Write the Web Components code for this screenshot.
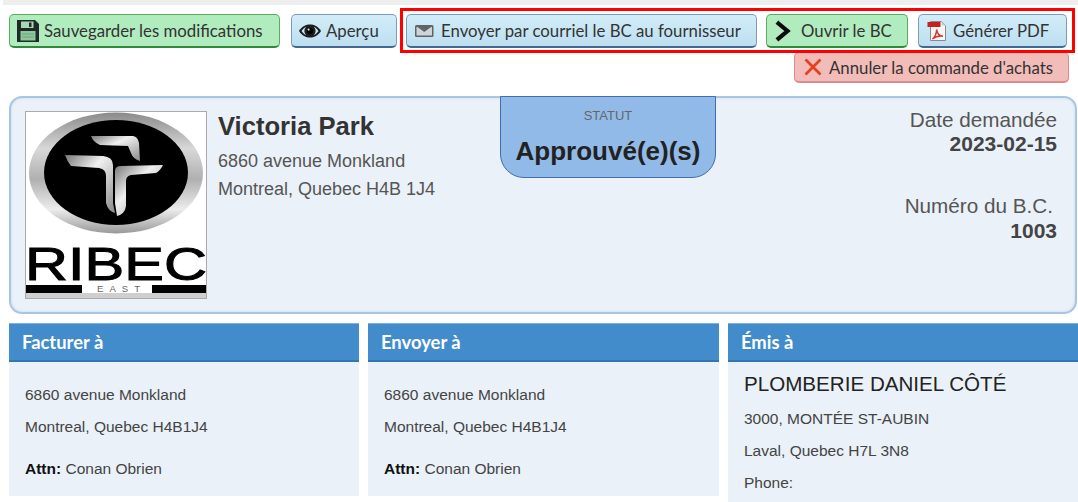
<!DOCTYPE html>
<html lang="fr">
<head>
<meta charset="utf-8">
<title>Bon de commande</title>
<style>
    html, body { margin: 0; height: 502px; overflow: hidden; background: #fff; }
    body { font-family: "Liberation Sans", Arial, sans-serif; color: #444; }
    .topstrip { height: 5px; margin-left: 3px; background: #eeeeee; }
    address-card b { color: #111; }
</style>
</head>
<body>
<div class="topstrip"></div>
<po-toolbar>
    <action-button slot="left" variant="green" style="width:271px">
        <svg slot="icon" width="22" height="22" viewBox="0 0 22 22"><path fill="#1f2a26" d="M0 0h18l4 4v18H0z"/><rect x="4" y="1.500" width="12.500" height="6.500" fill="#a9d9b4"/><rect x="12" y="2.500" width="2.500" height="4.500" fill="#1f2a26"/><rect x="3.500" y="11" width="15" height="9.500" fill="#8fc79c"/><path stroke="#6da67b" d="M5 14h12M5 17h12"/></svg>
        Sauvegarder les modifications
    </action-button>
    <action-button slot="left" variant="blue" style="width:106px">
        <svg slot="icon" width="22" height="22" viewBox="0 0 22 22"><path fill="#1c1c1c" d="M0 11C3 6.200 7 4.500 11 4.500S19 6.200 22 11c-3 4.800-7 6.500-11 6.500S3 15.800 0 11z"/><path fill="#c8e6f4" d="M2.500 11C4.500 8.400 6 7.300 7.300 6.800 6 8 5.400 9.400 5.400 11s.7 3 1.900 4.200C6 14.700 4.500 13.600 2.500 11zM19.500 11c-2 2.600-3.500 3.700-4.800 4.200 1.200-1.200 1.900-2.600 1.900-4.200s-.7-3-1.900-4.200c1.300.5 2.800 1.600 4.800 4.200z"/><circle cx="11" cy="11" r="3" fill="#000"/><circle cx="9.600" cy="9.600" r="1.100" fill="#ddd"/></svg>
        Aperçu
    </action-button>
    <action-button slot="boxed" variant="blue" style="width:351px">
        <svg slot="icon" width="22" height="22" viewBox="0 0 22 22"><rect x="1" y="5" width="18.500" height="12" rx="1.500" fill="#5f6467"/><rect x="2.500" y="7" width="15.500" height="8.500" fill="#cfd4d8"/><path fill="#5f6467" d="M2 6h16.500l-8.250 6z"/></svg>
        Envoyer par courriel le BC au fournisseur
    </action-button>
    <action-button slot="boxed" variant="green" style="width:142px;margin-left:9px">
        <svg slot="icon" width="22" height="22" viewBox="0 0 22 22"><path fill="none" stroke="#0c0c0c" stroke-width="4.200" stroke-linecap="square" d="M4.500 3.500l9 7.500-9 7.500"/></svg>
        Ouvrir le BC
    </action-button>
    <action-button slot="boxed" variant="blue" style="width:149px;margin-left:10px">
        <svg slot="icon" width="22" height="22" viewBox="0 0 22 22"><path fill="#f6f6f6" stroke="#8a8a8a" d="M4.500 1.500h11l4 4v15h-15z"/><path fill="#cfcfcf" d="M15.500 1.500v4h4z"/><rect x="1.500" y="2" width="13" height="5" fill="#c8201d"/><path fill="none" stroke="#d8352f" stroke-width="1.500" d="M6.500 19c2.500-2 4-5.500 4.200-9.500.3 3.500 2.300 6.300 6.300 6.700-3.800-.4-8 .7-10.500 2.800z"/></svg>
        Générer PDF
    </action-button>
    <action-button slot="under" variant="red" style="width:275px;height:31px">
        <svg slot="icon" width="22" height="22" viewBox="0 0 22 22"><path fill="none" stroke="#e8401f" stroke-width="2.800" d="M3.500 3.500l15 15M18.500 3.500l-15 15"/></svg>
        Annuler la commande d'achats
    </action-button>
</po-toolbar>
<po-summary>
    <ribec-logo slot="logo"></ribec-logo>
    <span slot="name">Victoria Park</span>
    <span slot="line1">6860 avenue Monkland</span>
    <span slot="line2">Montreal, Quebec H4B 1J4</span>
    <span slot="status">Approuvé(e)(s)</span>
</po-summary>
<address-row>
    <address-card heading="Facturer à">
        <p>6860 avenue Monkland</p>
        <p>Montreal, Quebec H4B1J4</p>
        <p class="attn"><b>Attn:</b> Conan Obrien</p>
    </address-card>
    <address-card heading="Envoyer à">
        <p>6860 avenue Monkland</p>
        <p>Montreal, Quebec H4B1J4</p>
        <p class="attn"><b>Attn:</b> Conan Obrien</p>
    </address-card>
    <address-card heading="Émis à" vendor>
        <p class="vendor">PLOMBERIE DANIEL CÔTÉ</p>
        <p>3000, MONTÉE ST-AUBIN</p>
        <p>Laval, Quebec H7L 3N8</p>
        <p>Phone:</p>
    </address-card>
</address-row>

<script>
class ActionButton extends HTMLElement {
    constructor() {
        super();
        this.attachShadow({ mode: "open" });
    }
    connectedCallback() {
        this.shadowRoot.innerHTML = `
        <style>
            :host {
                box-sizing: border-box;
                display: flex;
                align-items: center;
                flex: none;
                height: 34px;
                padding-left: 7px;
                gap: 5px;
                border: 1px solid;
                border-bottom-width: 2px;
                border-radius: 5px;
                font: 16.8px Lato, sans-serif;
                color: #333;
                white-space: nowrap;
            }
            :host([variant="green"]) { background: #b0ecbd; border-color: #58ad63 #58ad63 #2f8a3a; }
            :host([variant="blue"]) { background: linear-gradient(#d3edf8, #bcdff0); border-color: #7d9cbc #7d9cbc #45688f; }
            :host([variant="red"]) { background: #f2bdb9; border-color: #dd8a88; }
            .icon { display: flex; width: 22px; justify-content: center; }
        </style>
        <span class="icon"><slot name="icon"></slot></span>
        <slot></slot>`;
    }
}

class PoToolbar extends HTMLElement {
    constructor() {
        super();
        this.attachShadow({ mode: "open" });
    }
    connectedCallback() {
        this.shadowRoot.innerHTML = `
        <style>
            :host { display: block; padding-top: 3px; }
            .row { position: relative; z-index: 1; display: flex; align-items: flex-start; padding-left: 9px; }
            .left { display: flex; gap: 11px; padding-top: 6px; }
            .box {
                display: flex;
                box-sizing: border-box;
                width: 675px;
                height: 45px;
                margin-left: 3px;
                padding: 3px 0 0 3px;
                border: 3px solid #f00;
            }
            .under { display: flex; justify-content: flex-end; padding-right: 9px; margin-top: -1px; }
        </style>
        <div class="row">
            <div class="left"><slot name="left"></slot></div>
            <div class="box"><slot name="boxed"></slot></div>
        </div>
        <div class="under"><slot name="under"></slot></div>`;
    }
}

class RibecLogo extends HTMLElement {
    constructor() {
        super();
        this.attachShadow({ mode: "open" });
    }
    connectedCallback() {
        this.shadowRoot.innerHTML = `
        <style>
            :host { display: block; width: 182px; height: 188px; box-sizing: border-box; outline: 1px solid #aaa; outline-offset: -1px; background: #fff; }
            svg { display: block; }
            text { font-family: "Liberation Sans", sans-serif; }
        </style>
        <svg width="182" height="188" viewBox="0 0 182 188">
            <defs>
                <linearGradient id="rim" x1="0" y1="0" x2="0" y2="1">
                    <stop offset="0" stop-color="#8a8a8a"/><stop offset=".3" stop-color="#d8d8d8"/>
                    <stop offset=".55" stop-color="#b0b0b0"/><stop offset=".8" stop-color="#ececec"/><stop offset="1" stop-color="#999"/>
                </linearGradient>
                <linearGradient id="steel" x1="0" y1="0" x2="1" y2="1">
                    <stop offset="0" stop-color="#777"/><stop offset=".4" stop-color="#f0f0f0"/><stop offset="1" stop-color="#8a8a8a"/>
                </linearGradient>
            </defs>
            <ellipse cx="91" cy="62" rx="87" ry="60.500" fill="url(#rim)"/>
            <ellipse cx="91" cy="61.500" rx="72" ry="52.500" fill="#000"/>
            <path fill="url(#steel)" d="M66 25H108Q113 26 114 32L115 50Q108 48 106 42L103 35 75 34Q68 31 66 25Z"/>
            <path fill="url(#steel)" d="M40 44L78 45Q88 46 88 54V92L90 102Q83 100 81 92V65Q81 58 74 57L46 55Q42 50 40 44Z"/>
            <path fill="url(#steel)" d="M138 54Q135 60 131 62L106 64Q101 65 101 70V95Q100 103 92 105L90 92V60Q90 55 96 55Z"/>
            <text x="0" y="169" font-size="47" textLength="182" lengthAdjust="spacingAndGlyphs" fill="#000" stroke="#000" stroke-width="1">RIBEC</text>
            <rect y="174" width="57" height="8" fill="#000"/>
            <rect x="127" y="174" width="55" height="8" fill="#000"/>
            <text x="72" y="181" font-size="9.600" textLength="43" fill="#666">EAST</text>
            <rect y="182" width="182" height="6" fill="#cfcfcf"/>
        </svg>`;
    }
}

class PoSummary extends HTMLElement {
    constructor() {
        super();
        this.attachShadow({ mode: "open" });
    }
    connectedCallback() {
        this.shadowRoot.innerHTML = `
        <style>
            :host {
                display: grid;
                grid-template-columns: 489px 216px 1fr;
                box-sizing: border-box;
                width: 1068px;
                height: 218px;
                margin: 13px 0 9px 9px;
                border: 2px solid #a8c5e2;
                border-radius: 13px;
                background: #eaf1f8;
                box-shadow: inset 0 0 3px #c5d9ec;
            }
            .left { display: flex; gap: 11px; padding: 13px 0 0 14px; }
            h2 { margin: 0 0 7px; padding-top: 2px; font-size: 25.6px; line-height: 27px; color: #333; }
            .addr { font-size: 18px; line-height: 28px; color: #555; }
            .status {
                box-sizing: border-box;
                height: 82px;
                margin-top: -2px;
                padding-top: 12px;
                text-align: center;
                background: #92bae9;
                border: 1px solid #3f6fae;
                border-radius: 0 0 24px 24px;
            }
            .status small { display: block; font-size: 13px; line-height: 14px; color: #666; }
            .status strong { display: block; margin-top: 14px; font-size: 26px; line-height: 28px; color: #222; }
            .right { padding: 9px 18px 0 0; text-align: right; font-size: 20.7px; line-height: 25px; color: #555; }
            .right b { display: block; font-size: 21px; color: #444; }
            .right div:first-child b { margin-top: -1px; }
            .right div + div { margin-top: 37px; }
            .pad { padding-right: 4px; }
        </style>
        <div class="left">
            <slot name="logo"></slot>
            <div>
                <h2><slot name="name"></slot></h2>
                <div class="addr"><slot name="line1"></slot><br><slot name="line2"></slot></div>
            </div>
        </div>
        <div class="status">
            <small>STATUT</small>
            <strong><slot name="status"></slot></strong>
        </div>
        <div class="right">
            <div>Date demandée<b>2023-02-15</b></div>
            <div><span class="pad">Numéro du B.C.</span><b>1003</b></div>
        </div>`;
    }
}

class AddressRow extends HTMLElement {
    constructor() {
        super();
        this.attachShadow({ mode: "open" });
    }
    connectedCallback() {
        this.shadowRoot.innerHTML = `
        <style>
            :host { display: grid; grid-template-columns: 350px 351px 350px; gap: 9px; padding-left: 9px; align-items: start; }
        </style>
        <slot></slot>`;
    }
}

class AddressCard extends HTMLElement {
    constructor() {
        super();
        this.attachShadow({ mode: "open" });
    }
    connectedCallback() {
        const isVendor = this.hasAttribute("vendor");
        this.shadowRoot.innerHTML = `
        <style>
            :host {
                display: block;
                background: #eaf1f8;
                height: ${isVendor ? 179 : 173}px;
            }
            .head {
                box-sizing: border-box;
                height: 39px;
                padding-left: 13px;
                background: #438ccb;
                border-top: 1px solid #7fb2de;
                border-bottom: 2px solid #3575b0;
                font: bold 18.4px/36px Lato, sans-serif;
                color: #fff;
            }
            .body { padding: ${isVendor ? 8 : 17}px 16px 0; }
            ::slotted(p) { margin: 0; font-size: 15.5px; line-height: 32px; color: #444; }
            ::slotted(p.attn) { margin-top: 10px; }
            ::slotted(p.vendor) { font-size: 20.6px; line-height: 28px; margin-bottom: 5px; color: #222; }
        </style>
        <div class="head">${this.getAttribute("heading")}</div>
        <div class="body"><slot></slot></div>`;
    }
}

customElements.define("action-button", ActionButton);
customElements.define("po-toolbar", PoToolbar);
customElements.define("ribec-logo", RibecLogo);
customElements.define("po-summary", PoSummary);
customElements.define("address-row", AddressRow);
customElements.define("address-card", AddressCard);
</script>
</body>
</html>
